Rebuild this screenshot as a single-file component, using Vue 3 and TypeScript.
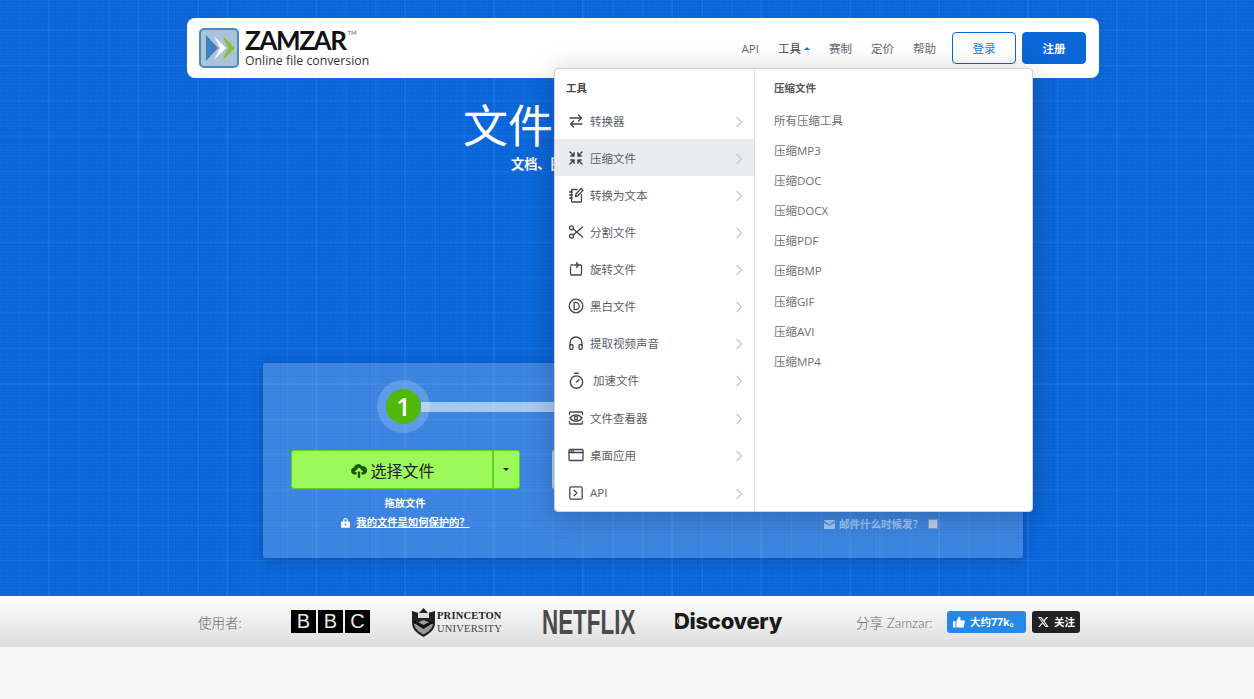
<script setup lang="ts">
interface MenuItem { label: string; icon: string; wide?: boolean; tall?: boolean; active?: boolean }
const menu: MenuItem[] = [
  { label: '转换器', icon: 'swap' },
  { label: '压缩文件', icon: 'compress', active: true },
  { label: '转换为文本', icon: 'note' },
  { label: '分割文件', icon: 'scissors' },
  { label: '旋转文件', icon: 'rotate' },
  { label: '黑白文件', icon: 'contrast' },
  { label: '提取视频声音', icon: 'headphones' },
  { label: '加速文件', icon: 'timer', wide: true },
  { label: '文件查看器', icon: 'eye' },
  { label: '桌面应用', icon: 'window', tall: true },
  { label: 'API', icon: 'terminal' },
]
const subs = ['所有压缩工具', '压缩MP3', '压缩DOC', '压缩DOCX', '压缩PDF', '压缩BMP', '压缩GIF', '压缩AVI', '压缩MP4']
const nav = ['赛制', '定价', '帮助']
</script>

<template>
  <div class="page">
    <section class="hero">
      <div class="wrap">
        <header class="header">
          <div class="logo">
            <svg class="logo-mark" width="40" height="40" viewBox="0 0 40 40">
              <rect x="1" y="1" width="38" height="38" rx="4" fill="#a9c3da" stroke="#4f88c0" stroke-width="2" />
              <path d="M7 7 L19 20 L7 33 Z" fill="#3f7fbe" />
              <path d="M15 8 L27 20 L15 32 L21 20 Z" fill="#fff" />
              <path d="M23 7 L36 20 L23 33 L29 20 Z" fill="#93bb3d" />
            </svg>
            <div class="logo-text">
              <div class="logo-name">ZAMZAR<sup>TM</sup></div>
              <div class="logo-sub">Online file conversion</div>
            </div>
          </div>
          <nav class="nav">
            <a class="nav-link api">API</a>
            <a class="nav-link tools">工具<i class="up"></i></a>
            <a v-for="n in nav" :key="n" class="nav-link">{{ n }}</a>
            <button class="btn-login">登录</button>
            <button class="btn-signup">注册</button>
          </nav>

          <div class="menu">
            <div class="menu-left">
              <div class="menu-title">工具</div>
              <div v-for="m in menu" :key="m.label" class="menu-row" :class="{ active: m.active, wide: m.wide, tall: m.tall }">
                <svg class="mi" :class="{ big: m.wide }" width="16" height="16" viewBox="0 0 16 16" fill="none" stroke="#3f464c" stroke-width="1.3" stroke-linecap="round" stroke-linejoin="round">
                  <template v-if="m.icon === 'swap'">
                    <path d="M2 5h11.500M10.500 2l3 3-3 3M14 11H2.500M5.500 8l-3 3 3 3" />
                  </template>
                  <template v-else-if="m.icon === 'compress'">
                    <path d="M2 2l4 4M6 2.800V6H2.800M14 2l-4 4M10 2.800V6h3.200M2 14l4-4M6 13.200V10H2.800M14 14l-4-4M10 13.200V10h3.200" stroke-width="1.500" />
                  </template>
                  <template v-else-if="m.icon === 'note'">
                    <path d="M3.500 3.500v10.500a1 1 0 0 0 1 1h8a1 1 0 0 0 1-1V8M3.500 3.500a1 1 0 0 1 1-1H9M1.500 5h3M1.500 8h3M1.500 11h3M7.500 9.500l.5-2.500 5-5.500 2 1.800-5 5.500z" />
                  </template>
                  <template v-else-if="m.icon === 'scissors'">
                    <circle cx="3.500" cy="3.800" r="2" /><circle cx="3.500" cy="12.200" r="2" />
                    <path d="M5.200 5L14.500 13M5.200 11L14.500 3" />
                  </template>
                  <template v-else-if="m.icon === 'rotate'">
                    <path d="M2.500 6v7a1 1 0 0 0 1 1h9a1 1 0 0 0 1-1V5a1 1 0 0 0-1-1H6.500M8.500 1.800L10.500 4 8.500 6.200M3 4h2" />
                  </template>
                  <template v-else-if="m.icon === 'contrast'">
                    <circle cx="8" cy="8" r="6.800" /><path d="M6.200 4.300h1.300a3.700 3.700 0 0 1 0 7.400H6.200z" />
                  </template>
                  <template v-else-if="m.icon === 'headphones'">
                    <path d="M2 10.500V8a6 6 0 0 1 12 0v2.500" /><rect x="1.800" y="9.500" width="3.200" height="4.800" rx="1.300" /><rect x="11" y="9.500" width="3.200" height="4.800" rx="1.300" />
                  </template>
                  <template v-else-if="m.icon === 'timer'">
                    <circle cx="8" cy="9.500" r="5.800" /><path d="M6.300 1.200h3.400M8 9.500l2.300-2.300" />
                  </template>
                  <template v-else-if="m.icon === 'eye'">
                    <path d="M1.500 4.500V3a1 1 0 0 1 1-1h11a1 1 0 0 1 1 1v1.500M1.500 11.500V13a1 1 0 0 0 1 1h11a1 1 0 0 0 1-1v-1.500M2 8c1.500-2 3.700-3.200 6-3.200S12.500 6 14 8c-1.500 2-3.700 3.200-6 3.200S3.500 10 2 8z" /><circle cx="8" cy="8" r="1.600" />
                  </template>
                  <template v-else-if="m.icon === 'window'">
                    <rect x="1" y="2.500" width="14" height="11" rx="1.200" /><path d="M1 5.500h14M3 4h.5M5 4h.5" />
                  </template>
                  <template v-else>
                    <rect x="1.800" y="1.800" width="12.400" height="12.400" rx="1.500" /><path d="M6 5.300L9 8l-3 2.700" />
                  </template>
                </svg>
                <span class="menu-label">{{ m.label }}</span>
                <svg class="chev" width="8" height="12" viewBox="0 0 8 12" fill="none" stroke="#c4c8cc" stroke-width="1.200"><path d="M1.500 1l5 5-5 5" /></svg>
              </div>
            </div>
            <div class="menu-right">
              <div class="menu-title">压缩文件</div>
              <a v-for="s in subs" :key="s" class="sub-row">{{ s }}</a>
            </div>
          </div>
        </header>

        <h1 class="title">文件</h1>
        <p class="subtitle">文档、图</p>

        <div class="panel-row">
          <div class="panel">
            <div class="steps">
              <div class="halo"><span class="dot">1</span></div>
              <div class="bar"></div>
              <div class="halo"><span class="dot grey"></span></div>
              <div class="bar"></div>
              <div class="halo"><span class="dot grey"></span></div>
            </div>
            <div class="cols">
              <div class="col">
                <div class="pick">
                  <button class="pick-main">
                    <svg width="18" height="18" viewBox="0 0 18 18"><path d="M4.500 13.500A3.500 3.500 0 0 1 3.800 6.600 4.500 4.500 0 0 1 12 5.200a4.200 4.200 0 0 1 1.800 8.300h-2.300V11h2L9 6.500 4.500 11h2v2.500zM7.800 10.500h2.400V17H7.800z" fill="#1d5a06" /></svg>
                    选择文件
                  </button>
                  <button class="pick-more"><i class="down"></i></button>
                </div>
                <div class="drop">拖放文件</div>
                <a class="safe">
                  <svg width="11" height="11" viewBox="0 0 12 12"><path d="M3.500 5V3.500a2.500 2.500 0 0 1 5 0V5H10a.8.8 0 0 1 .8.800v5a.8.8 0 0 1-.8.800H2a.8.8 0 0 1-.8-.8v-5A.8.8 0 0 1 2 5zM4.800 5h2.400V3.500a1.200 1.200 0 0 0-2.400 0zM5.300 7.200v2h1.400v-2z" fill="#fff" fill-rule="evenodd" /></svg>
                  <u>我的文件是如何保护的？</u>
                </a>
              </div>
              <div class="col">
                <div class="convert-select"></div>
              </div>
              <div class="col">
                <div class="convert-now"></div>
                <div class="mail">
                  <svg width="11" height="9" viewBox="0 0 11 9"><path d="M0 1a1 1 0 0 1 1-1h9a1 1 0 0 1 1 1L5.500 4.500zM0 2.400l5.500 3.400L11 2.400V8a1 1 0 0 1-1 1H1a1 1 0 0 1-1-1z" fill="currentColor" /></svg>
                  <span>邮件什么时候发？</span>
                  <i class="check"></i>
                </div>
              </div>
            </div>
          </div>
        </div>
      </div>
    </section>

    <section class="strip">
      <div class="strip-row">
        <span class="used">使用者:</span>
        <div class="bbc"><b>B</b><b>B</b><b>C</b></div>
        <div class="princeton">
          <svg width="25" height="30" viewBox="0 0 25 30">
            <path d="M1 4 L8 6 L12.500 1 L17 6 L24 4 V16 C24 23 18 27 12.500 30 C7 27 1 23 1 16 Z" fill="#222" />
            <path d="M3 17 L12.500 13 L22 17 C21 22 17 25 12.500 27.500 C8 25 4 22 3 17Z" fill="#9a9a9a" />
            <path d="M3 16 L12.500 22 L22 16 L22 13 L12.500 18 L3 13Z" fill="#111" />
            <rect x="7" y="6" width="11" height="5" fill="#ddd" />
          </svg>
          <div class="pt"><div class="p1">PRINCETON</div><div class="p2">UNIVERSITY</div></div>
        </div>
        <div class="netflix"><span>NETFLIX</span></div>
        <div class="discovery">Discovery<i class="swirl"></i></div>
        <span class="share">分享 Zamzar:</span>
        <button class="like">
          <svg width="12" height="12" viewBox="0 0 14 13"><path d="M0 5.500h3V13H0zM4 5.500L6.800 0c1.300 0 2 .9 2 2L8.300 4.500h4.200c1 0 1.500.9 1.300 1.700l-1.200 5.700c-.2.700-.7 1.100-1.400 1.100H4z" fill="#fff" /></svg>
          大约77k。
        </button>
        <button class="follow">
          <svg width="12" height="12" viewBox="0 0 24 24"><path d="M18.900 2H22l-7.200 8.200L23.300 22h-6.600l-5.200-6.800L5.500 22H2.400l7.700-8.800L2 2h6.800l4.700 6.200zM17.800 20h1.700L7.300 3.900H5.400z" fill="#fff" /></svg>
          关注
        </button>
      </div>
    </section>
    <div class="rest"></div>
  </div>
</template>

<style>
html, body { margin: 0; background: #f6f6f6; }
</style>

<style scoped>
.page { font-family: "Open Sans", "Noto Sans CJK SC", sans-serif; width: 1254px; height: 699px; overflow: hidden; background: #f6f6f6; }
.hero {
  height: 596px; box-sizing: border-box; padding-top: 18px;
  background-color: #0c67da;
  background-image:
    linear-gradient(to right, rgba(70,160,255,.12) 2px, transparent 2px),
    linear-gradient(to right, rgba(70,160,255,.07) 2px, transparent 2px),
    linear-gradient(to bottom, rgba(70,160,255,.11) 2px, transparent 2px),
    linear-gradient(to right, rgba(70,160,255,.05) 1px, transparent 1px),
    linear-gradient(to bottom, rgba(70,160,255,.05) 1px, transparent 1px),
    linear-gradient(to right, rgba(0,50,140,.05) 1px, transparent 1px),
    linear-gradient(to bottom, rgba(0,50,140,.05) 1px, transparent 1px);
  background-size: 89px 100%, 29.67px 100%, 100% 35.4px, 6px 100%, 100% 6px, 3px 100%, 100% 3px;
  background-position: 48px 0, 19px 0, 0 29px, 0 0, 0 0, 1px 0, 0 1px;
}
.wrap { width: 912px; margin-left: 187px; display: flex; flex-direction: column; }

.header {
  position: relative; z-index: 5; height: 60px; background: #fff; border-radius: 8px;
  display: flex; align-items: center; justify-content: space-between; padding: 0 13px 0 12px;
}
.logo { display: flex; align-items: center; gap: 6px; }
.logo-mark { display: block; }
.logo-text { display: flex; flex-direction: column; }
.logo-name { font: 700 26px/22px "Lato", sans-serif; color: #111; letter-spacing: -1.4px; position: relative; }
.logo-name sup { font-size: 6px; line-height: 0; position: absolute; top: 4px; margin-left: 2px; color: #555; letter-spacing: 0; font-weight: 400; }
.logo-sub { font: 400 12.3px/14px "Open Sans", sans-serif; color: #333; margin-top: 3px; }

.nav { display: flex; align-items: center; }
.nav-link { font-size: 11.5px; color: #636a70; margin-right: 19px; white-space: nowrap; }
.nav-link.tools { color: #3d4349; margin-right: 19px; display: flex; align-items: center; }
.up { display: inline-block; width: 0; height: 0; margin-left: 3px; border: 3.500px solid transparent; border-top: 0; border-bottom: 3.500px solid #1a73dd; }
.btn-login, .btn-signup { width: 64px; height: 32px; border-radius: 4px; font: inherit; font-size: 11.5px; box-sizing: border-box; padding: 0; }
.btn-login { background: #fff; border: 1px solid #0b66d6; color: #2a78d8; margin-left: -3px; }
.btn-signup { background: #0b66d6; border: 1px solid #0b66d6; color: #fff; font-weight: 700; margin-left: 6px; }

.menu {
  position: absolute; left: 367px; top: 50px; width: 479px; height: 444px; box-sizing: border-box;
  display: flex; background: #fff; border: 1px solid #cfd1d3; border-radius: 4px;
  box-shadow: 0 4px 28px rgba(0, 0, 0, .22); font-size: 11.5px; color: #62686e; overflow: hidden;
}
.menu-left { width: 199px; border-right: 1px solid #dcdee0; flex: none; }
.menu-right { flex: 1; padding-left: 19px; }
.menu-title { font-size: 10.5px; font-weight: 700; line-height: 14px; padding: 12px 0 7px; color: #555; }
.menu-left .menu-title { padding-left: 11px; color: #444; }
.menu-row { height: 37px; display: flex; align-items: center; padding-left: 13px; position: relative; color: #5a6066; }
.menu-row.wide, .menu-row.tall { height: 38px; }
.menu-row.active { background: #e9ecef; }
.mi { flex: none; margin-right: 6px; }
.mi.big { margin-right: 8px; width: 17px; height: 17px; }
.menu-label { flex: 1; }
.chev { position: absolute; left: 180px; top: 14px; }
.sub-row { display: block; height: 30.1px; line-height: 30.1px; color: #6a7076; }
.menu-right .menu-title { margin-bottom: 3px; padding-bottom: 8px; }

.title { margin: 23px 0 0; height: 50px; padding-left: 276px; font-size: 45px; line-height: 50px; font-weight: 400; color: #fff; white-space: nowrap; }
.subtitle { margin: 4px 0 0; padding-left: 324px; font-size: 13.2px; line-height: 18px; font-weight: 700; color: #fff; }

.panel-row { padding-left: 76px; margin-top: 190px; }
.panel {
  width: 760px; height: 195px; box-sizing: border-box; padding: 17px 23px 0;
  background-color: rgba(255, 255, 255, .2); border-radius: 3px;
  box-shadow: 0 2px 12px rgba(0, 40, 110, .35);
}
.steps { display: flex; align-items: center; padding: 0 116px 0 91px; height: 53px; }
.halo { width: 53px; height: 53px; flex: none; border-radius: 50%; background: rgba(255,255,255,.18); display: flex; align-items: center; justify-content: center; }
.dot { width: 35px; height: 35px; border-radius: 50%; background: #4fb808; color: #fff; font: 600 25px/35px "Open Sans", sans-serif; text-align: center; }
.dot.grey { background: #8fb4e8; }
.bar { flex: 1; height: 10px; margin: 0 -9px; background: rgba(255, 255, 255, .55); }
.cols { display: grid; grid-template-columns: repeat(3, 238px); margin-top: 17px; }
.col { display: flex; flex-direction: column; align-items: center; }
.pick { width: 229px; height: 39px; display: flex; }
.pick-main, .pick-more { background: #9cf95a; border: 1px solid #60cf22; font: inherit; color: #222; height: 39px; box-sizing: border-box; padding: 0; }
.pick-main { width: 201px; border-radius: 3px 0 0 3px; font-size: 16px; display: flex; align-items: center; justify-content: center; gap: 2px; border-right: 0; padding-left: 2px; }
.pick-more { width: 28px; border-radius: 0 3px 3px 0; border-left: 2px solid #60cf22; display: flex; align-items: center; justify-content: center; }
.down { width: 0; height: 0; border: 3px solid transparent; border-bottom: 0; border-top: 3px solid #222; }
.drop { font-size: 10.3px; line-height: 14px; font-weight: 700; color: #fff; margin-top: 7px; }
.safe { display: flex; align-items: center; gap: 5px; font-size: 10.3px; line-height: 14px; font-weight: 700; color: #fff; margin-top: 5px; }
.convert-select, .convert-now { width: 182px; height: 39px; background: rgba(255,255,255,.6); border-radius: 3px; }
.mail { display: flex; align-items: center; gap: 4px; margin-top: 28px; font-size: 10.5px; line-height: 14px; font-weight: 700; color: rgba(255, 255, 255, .5); }
.check { width: 8px; height: 8px; background: rgba(255,255,255,.6); border: 1px solid rgba(120,140,170,.8); border-radius: 1px; margin-left: 1px; }

.strip { height: 51px; background: linear-gradient(to bottom, #fff 0%, #dddddd 100%); box-sizing: border-box; }
.strip-row { display: flex; align-items: center; height: 51px; padding-left: 198px; }
.used { width: 93px; font: 300 13.5px "Lato", "Noto Sans CJK SC", sans-serif; color: #666; flex: none; }
.bbc { display: flex; gap: 2px; width: 120px; flex: none; }
.bbc b { width: 25px; height: 23px; background: #000; color: #e8e8e8; font: 400 20px/23px "Liberation Sans", sans-serif; text-align: center; }
.princeton { display: flex; align-items: center; gap: 1px; width: 131px; flex: none; }
.pt { font-family: "Liberation Serif", serif; color: #222; line-height: 13px; white-space: nowrap; }
.p1 { font-size: 10.5px; font-weight: 700; letter-spacing: .2px; }
.p2 { font-size: 10.5px; color: #444; letter-spacing: .2px; }
.netflix { width: 132px; height: 30px; flex: none; overflow: visible; }
.netflix span { display: inline-block; font: 700 35px/30px "Liberation Sans", sans-serif; color: #4a4a4a; transform: scaleX(.64); transform-origin: left center; white-space: nowrap; }
.discovery { position: relative; width: 182px; flex: none; font: 800 22px/26px "Inter", sans-serif; color: #1a1a1a; letter-spacing: -.3px; margin-top: -2px; }
.swirl { position: absolute; left: 3px; top: 9px; width: 6px; height: 6px; border: 1.500px solid #e8e8e8; border-radius: 50%; }
.share { width: 91px; flex: none; font: 300 13.5px "Lato", "Noto Sans CJK SC", sans-serif; color: #666; white-space: nowrap; }
.like, .follow { height: 22px; border: 0; border-radius: 3px; color: #fff; font: inherit; font-size: 10.5px; font-weight: 700; display: flex; align-items: center; justify-content: center; padding: 0; gap: 5px; }
.like { width: 79px; background: #2488e8; margin-right: 6px; }
.follow { width: 48px; background: #222; }
</style>
